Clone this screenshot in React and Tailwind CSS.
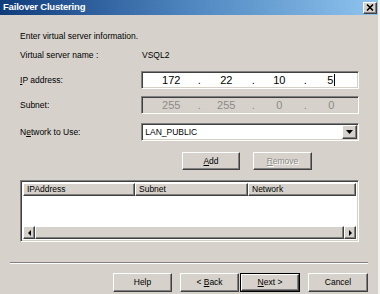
import React from 'react';

const font = { fontFamily: '"Liberation Sans", Arial, sans-serif' };

const sunken =
  'border border-t-[#808080] border-l-[#808080] border-b-white border-r-white shadow-[inset_1px_1px_0_#404040,inset_-1px_-1px_0_#d4d0c8]';
const raised =
  'border border-t-white border-l-white border-b-[#404040] border-r-[#404040] shadow-[inset_-1px_-1px_0_#808080]';

function Btn({ children, w, disabled, isDefault }) {
  if (isDefault) {
    return (
      <div className={`h-full border border-black ${w}`}>
        <div className={`h-full flex items-center justify-center ${raised} text-black`}>{children}</div>
      </div>
    );
  }
  return (
    <div
      className={`h-full flex items-center justify-center ${raised} ${w} ${
        disabled ? 'text-[#8c8a86] [text-shadow:1px_1px_0_#fff]' : 'text-black'
      }`}
    >
      {children}
    </div>
  );
}

function IpField({ parts, disabled, cursor }) {
  const widths = ['w-[54px]', 'w-[52px]', 'w-[50px]', 'w-[50px]'];
  return (
    <div
      className={`h-[18px] w-[219px] flex items-center pl-[2px] ${sunken} ${
        disabled ? 'bg-[#d6d2cb] text-[#8c8a86]' : 'bg-white text-black'
      } text-[11px]`}
    >
      {parts.map((p, i) => (
        <React.Fragment key={i}>
          <span className={`${widths[i]} flex justify-center items-center`}>
            {p}
            {cursor && i === 3 && <span className="inline-block w-px h-[12px] bg-black ml-[1px]" />}
          </span>
          {i < 3 && <span className="w-[2px] flex justify-center">.</span>}
        </React.Fragment>
      ))}
    </div>
  );
}

export default function App() {
  return (
    <div
      className="w-[380px] h-[294px] bg-[#d6d2cb] flex flex-col text-[8.5px] text-black overflow-hidden border-r-2 border-r-[#f4f2ee]"
      style={font}
    >
      {/* title bar */}
      <div className="h-[15px] flex items-center justify-between pl-[3px] pr-[1px] bg-gradient-to-r from-[#103c7c] via-[#4f86bf] to-[#8ec4ee]">
        <span className="text-white font-bold text-[9.5px] tracking-[-0.2px]">Failover Clustering</span>
        <div className={`w-[14px] h-[12px] bg-[#d6d2cb] ${raised} flex items-center justify-center`}>
          <svg width="8" height="7" viewBox="0 0 8 7">
            <path d="M1 0.5 L7 6.5 M7 0.5 L1 6.5" stroke="#000" strokeWidth="1.6" />
          </svg>
        </div>
      </div>

      <div className="flex flex-col pl-[20px] pr-[19px]">
        <div className="mt-[16px] h-[10px] leading-[10px]">Enter virtual server information.</div>
        <div className="mt-[9px] h-[10px] leading-[10px] flex">
          <span className="w-[122px]">Virtual server name :</span>
          <span>VSQL2</span>
        </div>

        <div className="mt-[11px] flex items-center">
          <span className="w-[122px]">
            <span className="underline">I</span>P address:
          </span>
          <IpField parts={['172', '22', '10', '5']} cursor />
        </div>

        <div className="mt-[7px] flex items-center">
          <span className="w-[122px]">Subnet:</span>
          <IpField parts={['255', '255', '0', '0']} disabled />
        </div>

        <div className="mt-[9px] flex items-center">
          <span className="w-[122px]">
            N<span className="underline">e</span>twork to Use:
          </span>
          <div className={`h-[18px] w-[219px] bg-white flex items-center justify-between pl-[3px] pr-[1px] ${sunken}`}>
            <span>LAN_PUBLIC</span>
            <div className={`w-[15px] h-[14px] bg-[#d6d2cb] ${raised} flex items-center justify-center`}>
              <svg width="7" height="4" viewBox="0 0 7 4">
                <path d="M0 0 H7 L3.5 4 Z" fill="#000" />
              </svg>
            </div>
          </div>
        </div>

        <div className="mt-[11px] h-[18px] flex ml-[162px] gap-[13px]">
          <Btn w="w-[58px]">
            <span className="underline">A</span>dd
          </Btn>
          <Btn w="w-[59px]" disabled>
            <span className="underline">R</span>emove
          </Btn>
        </div>

        {/* list view */}
        <div className={`mt-[10px] h-[62px] bg-white flex flex-col p-[2px] ${sunken}`}>
          <div className="h-[13px] flex bg-[#d6d2cb]">
            <div className={`w-[112px] ${raised} pl-[3px] flex items-center`}>IPAddress</div>
            <div className={`w-[113px] ${raised} pl-[3px] flex items-center`}>Subnet</div>
            <div className={`flex-1 ${raised} pl-[3px] flex items-center`}>Network</div>
          </div>
          <div className="flex-1" />
          <div className="h-[13px] flex bg-[#ebe9e5]">
            <div className={`w-[12px] bg-[#d6d2cb] ${raised} flex items-center justify-center`}>
              <svg width="3" height="6" viewBox="0 0 3 6">
                <path d="M3 0 V6 L0 3 Z" fill="#000" />
              </svg>
            </div>
            <div className={`flex-1 bg-[#d6d2cb] ${raised}`} />
            <div className={`w-[12px] bg-[#d6d2cb] ${raised} flex items-center justify-center`}>
              <svg width="3" height="6" viewBox="0 0 3 6">
                <path d="M0 0 V6 L3 3 Z" fill="#000" />
              </svg>
            </div>
          </div>
        </div>
      </div>

      <div className="mt-[20px] mx-[10px] h-[2px] border-t border-t-[#808080] border-b border-b-white" />

      <div className="mt-[9px] h-[19px] flex justify-end pr-[10px]">
        <Btn w="w-[59px]">Help</Btn>
        <div className="w-[8px]" />
        <Btn w="w-[59px]">
          &lt;&nbsp;<span className="underline">B</span>ack
        </Btn>
        <div className="w-[1px]" />
        <Btn w="w-[60px]" isDefault>
          <span className="underline">N</span>ext&nbsp;&gt;
        </Btn>
        <div className="w-[8px]" />
        <Btn w="w-[60px]">Cancel</Btn>
      </div>
    </div>
  );
}
